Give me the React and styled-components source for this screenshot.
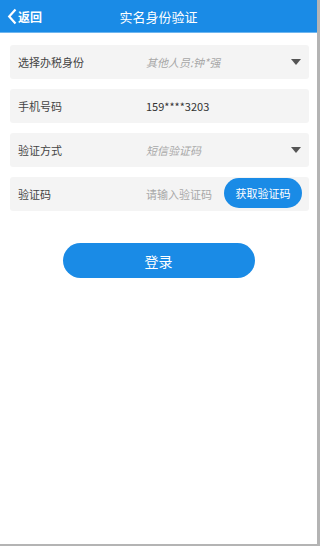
import React from 'react';
import styled, { createGlobalStyle } from 'styled-components';

const GlobalStyle = createGlobalStyle`
  html, body {
    margin: 0;
    padding: 0;
    background: #b4b4b4;
  }
  body {
    font-family: "Noto Sans CJK SC", "Liberation Sans", sans-serif;
  }
`;

const Page = styled.div`
  width: 317px;
  height: 544px;
  background: #fff;
  display: flex;
  flex-direction: column;
`;

const Header = styled.header`
  height: 32px;
  background: #1a8be6;
  border-bottom: 1px solid #6fb6ef;
  position: relative;
  display: flex;
  align-items: center;
  justify-content: center;
`;

const Back = styled.div`
  position: absolute;
  left: 7px;
  top: 0;
  height: 32px;
  display: flex;
  align-items: center;
  color: #fff;
  font-size: 12px;
  font-weight: bold;
  gap: 1px;
`;

const Title = styled.h1`
  margin: 0;
  font-size: 13px;
  font-weight: normal;
  color: #fff;
`;

const Form = styled.div`
  display: flex;
  flex-direction: column;
  gap: 10px;
  padding: 12px 8px 0 10px;
`;

const Row = styled.div`
  height: 34px;
  background: #f4f4f4;
  border-radius: 3px;
  display: flex;
  align-items: center;
  padding: 0 7px 0 8px;
  font-size: 11px;
`;

const Label = styled.span`
  width: 128px;
  color: #444;
  flex-shrink: 0;
`;

const Value = styled.span`
  flex: 1;
  color: ${(p) => (p.$placeholder ? '#a8a8a8' : '#333')};
  font-style: ${(p) => (p.$italic ? 'italic' : 'normal')};
`;

const Caret = styled.span`
  width: 0;
  height: 0;
  border-left: 5px solid transparent;
  border-right: 5px solid transparent;
  border-top: 6px solid #555;
  margin-right: 1px;
`;

const CodeButton = styled.button`
  width: 78px;
  height: 30px;
  margin-top: -3px;
  border: none;
  border-radius: 15px;
  background: #1a8be6;
  color: #fff;
  font-family: inherit;
  font-size: 11px;
  padding: 0;
`;

const Submit = styled.button`
  align-self: center;
  width: 192px;
  height: 35px;
  margin: 32px 0 0 0;
  border: none;
  border-radius: 18px;
  background: #1a8be6;
  color: #fff;
  font-family: inherit;
  font-size: 14px;
`;

const Chevron = () => (
  <svg width="10" height="17" viewBox="0 0 10 17">
    <path d="M8.5 1.5 L2.2 8.5 L8.5 15.5" fill="none" stroke="#fff" strokeWidth="2.2" />
  </svg>
);

export default function App() {
  return (
    <>
      <GlobalStyle />
      <Page>
        <Header>
          <Back>
            <Chevron />
            <span>返回</span>
          </Back>
          <Title>实名身份验证</Title>
        </Header>
        <Form>
          <Row>
            <Label>选择办税身份</Label>
            <Value $placeholder $italic>其他人员:钟*强</Value>
            <Caret />
          </Row>
          <Row>
            <Label>手机号码</Label>
            <Value>159****3203</Value>
          </Row>
          <Row>
            <Label>验证方式</Label>
            <Value $placeholder $italic>短信验证码</Value>
            <Caret />
          </Row>
          <Row>
            <Label>验证码</Label>
            <Value $placeholder>请输入验证码</Value>
            <CodeButton>获取验证码</CodeButton>
          </Row>
        </Form>
        <Submit>登录</Submit>
      </Page>
    </>
  );
}
